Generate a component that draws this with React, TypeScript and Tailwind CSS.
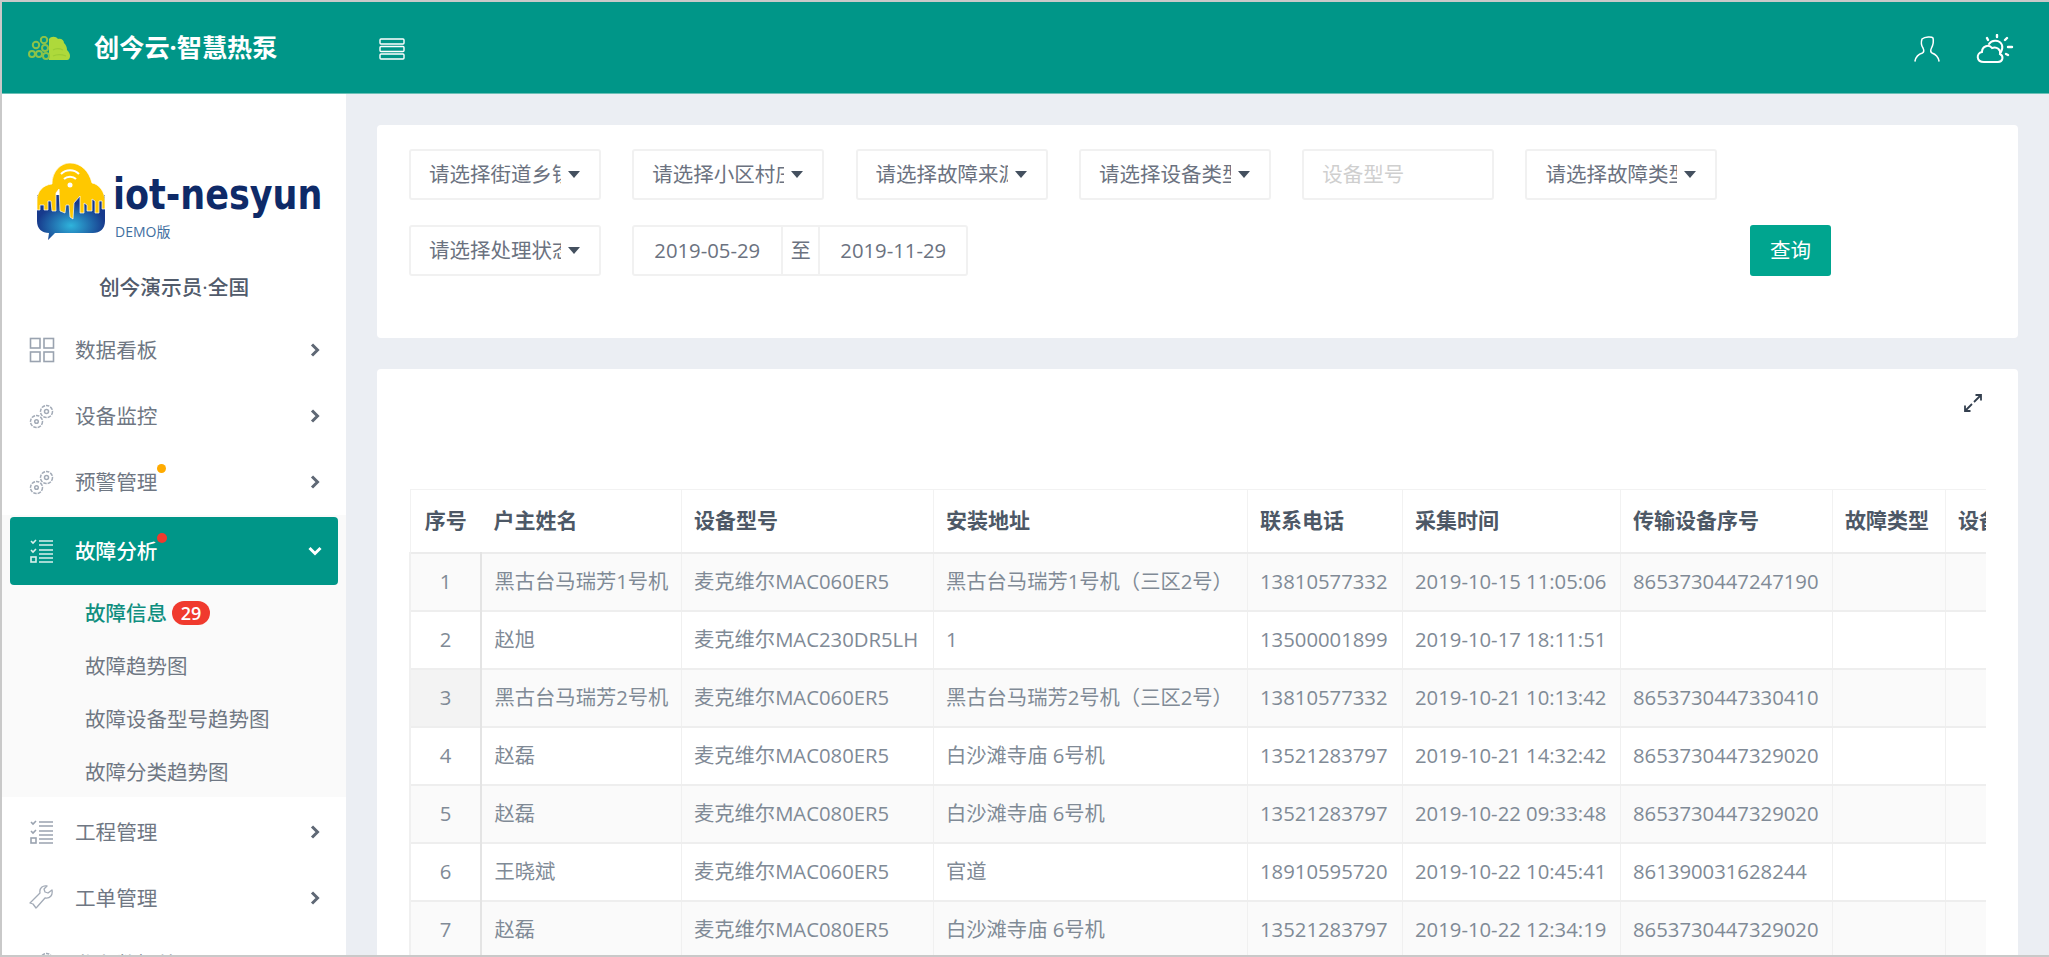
import React from "react";

const font = { cjk: "font-['Open_Sans','Noto_Sans_CJK_SC',sans-serif]" };

const filters1 = ["请选择街道乡镇", "请选择小区村庄", "请选择故障来源", "请选择设备类型"];

const columns = [
  { title: "序号", width: 71 },
  { title: "户主姓名", width: 200 },
  { title: "设备型号", width: 252 },
  { title: "安装地址", width: 314 },
  { title: "联系电话", width: 155 },
  { title: "采集时间", width: 218 },
  { title: "传输设备序号", width: 212 },
  { title: "故障类型", width: 113 },
  { title: "设备名称", width: 200 },
];

const rows = [
  ["黑古台马瑞芳1号机", "麦克维尔MAC060ER5", "黑古台马瑞芳1号机（三区2号）", "13810577332", "2019-10-15 11:05:06", "8653730447247190"],
  ["赵旭", "麦克维尔MAC230DR5LH", "1", "13500001899", "2019-10-17 18:11:51", ""],
  ["黑古台马瑞芳2号机", "麦克维尔MAC060ER5", "黑古台马瑞芳2号机（三区2号）", "13810577332", "2019-10-21 10:13:42", "8653730447330410"],
  ["赵磊", "麦克维尔MAC080ER5", "白沙滩寺庙 6号机", "13521283797", "2019-10-21 14:32:42", "8653730447329020"],
  ["赵磊", "麦克维尔MAC080ER5", "白沙滩寺庙 6号机", "13521283797", "2019-10-22 09:33:48", "8653730447329020"],
  ["王晓斌", "麦克维尔MAC060ER5", "官道", "18910595720", "2019-10-22 10:45:41", "861390031628244"],
  ["赵磊", "麦克维尔MAC080ER5", "白沙滩寺庙 6号机", "13521283797", "2019-10-22 12:34:19", "8653730447329020"],
];

function GridIcon() {
  return (
    <svg width="26" height="26" viewBox="0 0 26 26" fill="none" stroke="#9aa3b0" strokeWidth="1.6">
      <rect x="1.5" y="1.5" width="9.5" height="9.5" />
      <rect x="15" y="1.5" width="9.5" height="9.5" />
      <rect x="1.5" y="15" width="9.5" height="9.5" />
      <rect x="15" y="15" width="9.5" height="9.5" />
    </svg>
  );
}

function GearsIcon() {
  return (
    <svg width="26" height="26" viewBox="0 0 26 26" fill="none" stroke="#a3abb7" strokeWidth="1.5">
      <circle cx="17.5" cy="8.500" r="6" strokeDasharray="3.500 1" />
      <circle cx="17.5" cy="8.500" r="2" />
      <circle cx="7.5" cy="18.500" r="6" strokeDasharray="3.500 1" />
      <circle cx="7.5" cy="18.500" r="1.800" />
    </svg>
  );
}

function ListIcon({ color = "#9aa3b0" }: { color?: string }) {
  return (
    <svg width="26" height="26" viewBox="0 0 26 26" fill="none" stroke={color} strokeWidth="1.6">
      <path d="M2 3l2 2 3-3M2 12l2 2 3-3" />
      <rect x="2" y="19" width="5" height="5" />
      <path d="M10 3h14M10 7h14M10 12h14M10 16h14M10 20h14M10 24h14" />
    </svg>
  );
}

function WrenchIcon() {
  return (
    <svg width="26" height="26" viewBox="0 0 26 26" fill="none" stroke="#a3abb7" strokeWidth="1.300" strokeLinejoin="round">
      <path d="M23 5l-4 3-3-1-1-3 3-3c-4-1-8 2-7 7L1 18l3 1 3 4 1-1 8-9c5 1 8-3 7-8z" />
    </svg>
  );
}

function Chevron({ open, color = "#5f6875" }: { open?: boolean; color?: string }) {
  return (
    <svg width="16" height="16" viewBox="0 0 16 16" fill="none" stroke={color} strokeWidth="3">
      {open ? <path d="M2.5 5L8 10.500 13.500 5" /> : <path d="M5 2.500L10.500 8 5 13.500" />}
    </svg>
  );
}

function Caret() {
  return <span className="h-0 w-0 border-x-[6px] border-t-[7px] border-x-transparent border-t-[#44505f]" />;
}

function MenuItem({ icon, label, dot, low }: { icon: React.ReactNode; label: string; dot?: boolean; low?: boolean }) {
  return (
    <div className={`flex h-[66px] items-center pl-[27px] pr-[23px] ${low ? "pt-[4px]" : ""}`}>
      <span className="flex w-[46px] shrink-0">{icon}</span>
      <span className="relative flex-1 text-[20.600px] text-[#6f7783]">
        {label}
        {dot ? <span className="absolute left-[82px] top-[-3px] h-[9px] w-[9px] rounded-full bg-[#ffab00]" /> : null}
      </span>
      <Chevron />
    </div>
  );
}

function Select({ label }: { label: string }) {
  return (
    <div className="flex h-[51px] w-[192px] shrink-0 items-center rounded-[3px] border-2 border-[#f1f1f1] pl-[18px]">
      <span className="w-[132px] overflow-hidden whitespace-nowrap text-[20.500px] text-[#6b7280]">{label}</span>
      <span className="ml-[7px] flex">
        <Caret />
      </span>
    </div>
  );
}

export default function App() {
  return (
    <div className={`flex h-[957px] w-full flex-col overflow-hidden border-y-2 border-l-2 border-[#c9c9c9] bg-[#ebeef3] ${font.cjk}`}>
      <header className="flex h-[92px] shrink-0 items-center border-b border-[#6cc0b6] bg-[#009688] pr-[35px]">
        <svg width="42" height="24" viewBox="0 0 42 24" className="ml-[26px]">
          <path d="M21 24V3c2-3 7-3 9 0 3-1 6 1 6 4 2 2 3 4 3 7 2 2 3 4 3 6 0 2-1 4-3 4z" fill="#aed93b" />
          <path d="M25 20c4-2 8-2 13 0M25 14c3-2 6-2 10 0" fill="none" stroke="#9ccc34" strokeWidth="1.200" />
          <g fill="none" stroke="#8bc34a" strokeWidth="2">
            <circle cx="4" cy="18" r="3" />
            <circle cx="8" cy="9" r="3.200" />
            <circle cx="16" cy="4" r="3.200" />
            <circle cx="11" cy="18" r="3" />
            <circle cx="17" cy="12" r="3" />
            <circle cx="18" cy="20" r="3" />
          </g>
        </svg>
        <span className="ml-[24px] text-[25.200px] font-bold text-white">创今云·智慧热泵</span>
        <svg width="26" height="22" viewBox="0 0 26 22" fill="none" stroke="#fff" strokeWidth="1.400" className="ml-[101px] mt-[3px]">
          <rect x="1" y="1" width="24" height="5" rx="1" />
          <rect x="1" y="8.500" width="24" height="5" rx="1" />
          <rect x="1" y="16" width="24" height="5" rx="1" />
        </svg>
        <div className="ml-auto flex items-center gap-[36px] pt-[3px]">
          <svg width="26" height="28" viewBox="0 0 26 28" fill="none" stroke="#fff" strokeWidth="1.500" strokeLinecap="round">
            <path d="M8 4C11 1.500 18 1.500 19 3c1 4 0 7-1.500 10-1 2-1 4 .5 5 3 1 6 3 7 8M8 4c-1 3-1 6 1 9 1 2 1 4-.5 5-3.500 1-6.500 3-7.500 8" />
          </svg>
          <svg width="38" height="30" viewBox="0 0 38 30" fill="none" stroke="#fff" strokeWidth="2" strokeLinecap="round">
            <path d="M8 28c-8 0-8-9-2-10 0-6 7-8 10-4 5-2 9 2 8 6 4 2 3 8-2 8z" />
            <path d="M13 10c3-5 11-4 13 1 1 3 0 5-1 7" />
            <path d="M21 1v2M31 4l-2 2M36 13h-4M32 21l-2-1M11 4l1 2" strokeWidth="2.400" />
          </svg>
        </div>
      </header>

      <div className="flex min-h-0 flex-1">
        <aside className="w-[344px] shrink-0 overflow-hidden bg-white">
          <div className="h-[223px] pt-[69px]">
            <div className="flex items-start pl-[35px]">
              <svg width="68" height="77" viewBox="0 0 68 77" className="shrink-0">
                <defs>
                  <radialGradient id="city" cx="50%" cy="68%" r="50%">
                    <stop offset="0%" stopColor="#2fb4dc" />
                    <stop offset="100%" stopColor="#173a8c" />
                  </radialGradient>
                </defs>
                <path d="M0 32H68V58C68 66 63 70 56 70H18L11 77 12 70C5 70 0 66 0 58z" fill="url(#city)" />
                <path
                  d="M0 38C0 28 6 22 15 21 15 8 24 0 33 0 44 0 52 8 55 20 62 21 68 29 68 38V46H65V38H62V50H58V38L55 36V48H50V42L47 40V50H43V33L37 40 36 56 33 54 32 42H29L28 50 23 48 22 26 19 30V48H15L14 38H11V47H7V42H3V47H0z"
                  fill="#ffc800"
                  stroke="#fff"
                  strokeWidth="0.700"
                />
                <g fill="none" stroke="#fff" strokeWidth="2">
                  <path d="M24 11c5-5 13-5 18 0M27 16c3-3 9-3 12 0" />
                </g>
                <circle cx="33" cy="22" r="2.500" fill="#fff" />
              </svg>
              <div className="ml-[8px] mt-[15px]">
                <div className="origin-bottom-left scale-y-[1.2] font-['DejaVu_Sans',sans-serif] text-[35px] leading-[42px] font-bold text-[#0e2a68]">iot-nesyun</div>
                <div className="ml-[2px] mt-[3px] text-[14px] leading-[18px] text-[#3f6f9f]">DEMO版</div>
              </div>
            </div>
            <div className="mt-[31px] text-center text-[20.700px] font-medium text-[#515b6b]">创今演示员·全国</div>
          </div>

          <MenuItem icon={<GridIcon />} label="数据看板" />
          <MenuItem icon={<GearsIcon />} label="设备监控" />
          <MenuItem icon={<GearsIcon />} label="预警管理" dot />

          <div className="bg-[#fafafa] pt-[2px]">
            <div className="mx-[8px] flex h-[68px] items-center rounded-[4px] bg-[#009688] pl-[19px] pr-[15px]">
              <span className="flex w-[46px] shrink-0">
                <ListIcon color="#d9f0ec" />
              </span>
              <span className="relative flex-1 text-[20.600px] font-medium text-white">
                故障分析
                <span className="absolute left-[82px] top-[-3px] h-[10px] w-[10px] rounded-full bg-[#f03a2e]" />
              </span>
              <Chevron open color="#fff" />
            </div>
            <div className="flex h-[53px] items-center pl-[83px] pt-[3px] text-[20.500px] font-medium text-[#0f8f80]">
              故障信息
              <span className="ml-[5px] flex h-[24px] w-[38px] items-center justify-center rounded-full bg-[#f03a2e] text-[18px] font-semibold text-white">29</span>
            </div>
            <div className="flex h-[53px] items-center pl-[83px] pt-[3px] text-[20.500px] text-[#6f7783]">故障趋势图</div>
            <div className="flex h-[53px] items-center pl-[83px] pt-[3px] text-[20.500px] text-[#6f7783]">故障设备型号趋势图</div>
            <div className="flex h-[53px] items-center pl-[83px] pt-[3px] text-[20.500px] text-[#6f7783]">故障分类趋势图</div>
          </div>

          <MenuItem icon={<ListIcon />} label="工程管理" low />
          <MenuItem icon={<WrenchIcon />} label="工单管理" low />
          <MenuItem icon={<GearsIcon />} label="业务数据处理" low />
        </aside>

        <main className="min-w-0 flex-1 overflow-hidden px-[31px] pt-[31px]">
          <section className="flex h-[213px] flex-col gap-[25px] rounded-[4px] bg-white px-[32px] pt-[24px]">
            <div className="flex gap-[31.300px]">
              {filters1.map((label) => (
                <Select key={label} label={label} />
              ))}
              <div className="flex h-[51px] w-[192px] shrink-0 items-center rounded-[3px] border-2 border-[#f1f1f1] pl-[18px] text-[20.500px] text-[#cfcfcf]">设备型号</div>
              <Select label="请选择故障类型" />
            </div>
            <div className="flex gap-[31.300px] pr-[155px]">
              <Select label="请选择处理状态" />
              <div className="flex h-[51px] w-[336px] items-center rounded-[3px] border-2 border-[#f1f1f1] text-[20.300px] text-[#6b7280]">
                <span className="w-[147px] pl-[20px]">2019-05-29</span>
                <span className="flex h-full w-[39px] items-center justify-center border-x-2 border-[#f1f1f1] text-[20px]">至</span>
                <span className="flex-1 pl-[20px]">2019-11-29</span>
              </div>
              <button className="ml-auto h-[51px] w-[81px] rounded-[3px] bg-[#00a58f] text-[20.500px] text-white">查询</button>
            </div>
          </section>

          <section className="mt-[31px] h-[600px] rounded-[4px] bg-white pl-[32px] pr-[32px] pt-[25px]">
            <div className="flex justify-end pr-[4px]">
              <svg width="18" height="18" viewBox="0 0 18 18" fill="none" stroke="#34404f" strokeWidth="1.800">
                <path d="M10 8l7-7M11.500 1H17v5.500M8 10l-7 7M1 11.500V17h5.500" />
              </svg>
            </div>
            <div className="mt-[77px] overflow-hidden">
              <table className="w-[1735px] table-fixed border-collapse text-[20.300px] text-[#808a96]">
                <colgroup>
                  {columns.map((column) => (
                    <col key={column.title} style={{ width: column.width }} />
                  ))}
                </colgroup>
                <thead>
                  <tr className="h-[63px] border-b-2 border-[#ececec]">
                    {columns.map((column, index) => (
                      <th
                        key={column.title}
                        className={`overflow-hidden border-t border-[#f2f2f2] text-[21px] font-semibold whitespace-nowrap text-[#4d5866] ${
                          index === 0 ? "border-l text-center" : "border-r pl-[12.500px] text-left"
                        }`}
                      >
                        {column.title}
                      </th>
                    ))}
                  </tr>
                </thead>
                <tbody>
                  {rows.map((row, rowIndex) => (
                    <tr key={rowIndex} className={`h-[58px] border-b-2 border-[#eeeeee] ${rowIndex % 2 === 0 ? "bg-[#fafafa]" : "bg-white"}`}>
                      <td className={`border-x-2 border-r-[#e4e4e4] border-l-[#f0f0f0] pb-[1px] text-center ${rowIndex === 2 ? "bg-[#f3f3f3]" : ""}`}>{rowIndex + 1}</td>
                      {row.map((cell, cellIndex) => (
                        <td key={cellIndex} className="overflow-hidden border-r border-[#f0f0f0] pb-[1px] pl-[12.500px] whitespace-nowrap">
                          {cell}
                        </td>
                      ))}
                      <td className="border-r border-[#f0f0f0]" />
                      <td className="border-r border-[#f0f0f0]" />
                    </tr>
                  ))}
                </tbody>
              </table>
            </div>
          </section>
        </main>
      </div>
    </div>
  );
}
